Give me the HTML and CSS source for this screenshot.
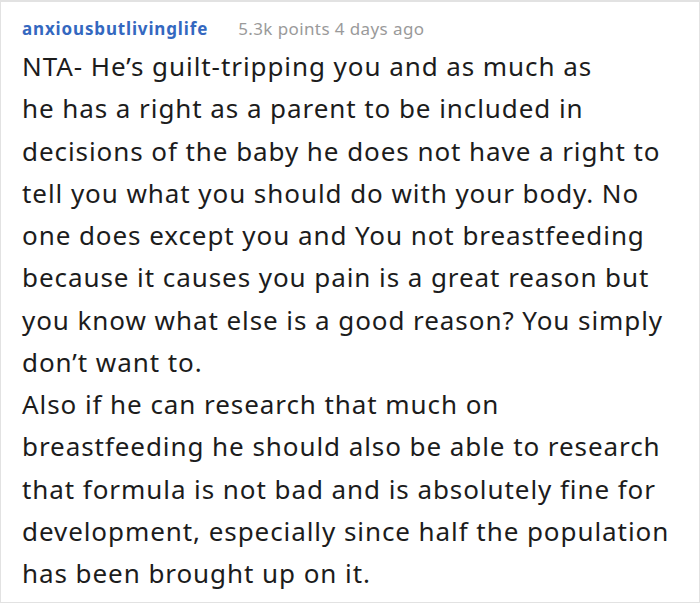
FILE: index.html
```html
<!DOCTYPE html>
<html lang="en">
<head>
<meta charset="utf-8">
<title>Comment</title>
<link rel="stylesheet" href="styles.css">
</head>
<body>
<div class="comment">
  <div class="comment-header">
    <span class="author">anxiousbutlivinglife</span>
    <span class="meta">5.3k points 4 days ago</span>
  </div>
  <div class="comment-body">
    <p>NTA- He’s guilt-tripping you and as much as<br>he has a right as a parent to be included in<br>decisions of the baby he does not have a right to<br>tell you what you should do with your body. No<br>one does except you and You not breastfeeding<br>because it causes you pain is a great reason but<br>you know what else is a good reason? You simply<br>don’t want to.</p>
    <p>Also if he can research that much on<br>breastfeeding he should also be able to research<br>that formula is not bad and is absolutely fine for<br>development, especially since half the population<br>has been brought up on it.</p>
  </div>
</div>
</body>
</html>
```
FILE: styles.css
```css
html, body {
  margin: 0;
  padding: 0;
  background: #ffffff;
}

.comment {
  box-sizing: border-box;
  width: 700px;
  height: 603px;
  border: 1px solid #e2e2e2;
  border-top-width: 2px;
  padding: 15px 8px 0 21px;
  font-family: "Noto Sans", "Open Sans", sans-serif;
  overflow: hidden;
}

.comment-header {
  display: flex;
  align-items: baseline;
  gap: 30px;
  line-height: 24px;
  font-size: 17px;
  margin-bottom: 4px;
}

.author {
  color: #3468c0;
  font-weight: 700;
  letter-spacing: 0.85px;
}

.meta {
  color: #9a9a9a;
  letter-spacing: 0.4px;
}

.comment-body {
  font-size: 26px;
  line-height: 42.25px;
  letter-spacing: 0.93px;
  color: #1c1c1c;
  white-space: nowrap;
}

.comment-body p {
  margin: 0;
}
```
